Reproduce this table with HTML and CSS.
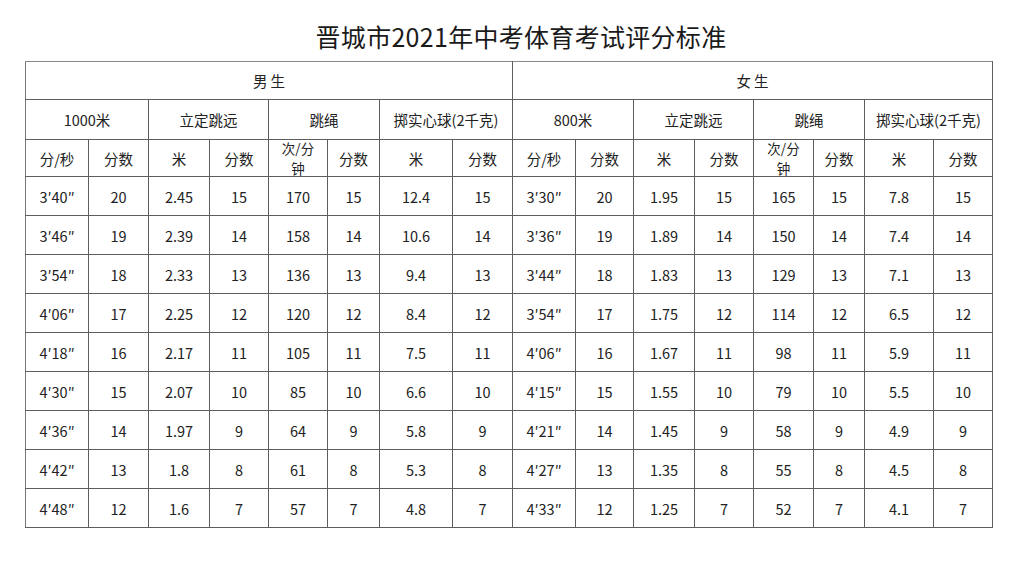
FILE: index.html
```html
<!DOCTYPE html>
<html lang="zh-CN">
<head>
<meta charset="utf-8">
<title>晋城市2021年中考体育考试评分标准</title>
<link rel="stylesheet" href="styles.css">
</head>
<body>
<div class="page">
  <h1 class="title">晋城市2021年中考体育考试评分标准</h1>
  <table class="score">
    <colgroup>
      <col style="width:63px"><col style="width:60px"><col style="width:61px"><col style="width:59px">
      <col style="width:59px"><col style="width:52px"><col style="width:73px"><col style="width:60px">
      <col style="width:63px"><col style="width:58px"><col style="width:61px"><col style="width:59px">
      <col style="width:60px"><col style="width:51px"><col style="width:69px"><col style="width:59px">
    </colgroup>
    <tr class="r1">
      <td colspan="8">男&nbsp;生</td>
      <td colspan="8">女&nbsp;生</td>
    </tr>
    <tr class="r2">
      <td colspan="2">1000米</td><td colspan="2">立定跳远</td><td colspan="2">跳绳</td><td colspan="2">掷实心球(2千克)</td>
      <td colspan="2">800米</td><td colspan="2">立定跳远</td><td colspan="2">跳绳</td><td colspan="2">掷实心球(2千克)</td>
    </tr>
    <tr class="r3">
      <td>分/秒</td><td>分数</td><td>米</td><td>分数</td><td class="two"><div class="stack"><span>次/分</span><span>钟</span></div></td><td>分数</td><td>米</td><td>分数</td>
      <td>分/秒</td><td>分数</td><td>米</td><td>分数</td><td class="two"><div class="stack"><span>次/分</span><span>钟</span></div></td><td>分数</td><td>米</td><td>分数</td>
    </tr>
    <tr><td>3′40″</td><td>20</td><td>2.45</td><td>15</td><td>170</td><td>15</td><td>12.4</td><td>15</td><td>3′30″</td><td>20</td><td>1.95</td><td>15</td><td>165</td><td>15</td><td>7.8</td><td>15</td></tr>
    <tr><td>3′46″</td><td>19</td><td>2.39</td><td>14</td><td>158</td><td>14</td><td>10.6</td><td>14</td><td>3′36″</td><td>19</td><td>1.89</td><td>14</td><td>150</td><td>14</td><td>7.4</td><td>14</td></tr>
    <tr><td>3′54″</td><td>18</td><td>2.33</td><td>13</td><td>136</td><td>13</td><td>9.4</td><td>13</td><td>3′44″</td><td>18</td><td>1.83</td><td>13</td><td>129</td><td>13</td><td>7.1</td><td>13</td></tr>
    <tr><td>4′06″</td><td>17</td><td>2.25</td><td>12</td><td>120</td><td>12</td><td>8.4</td><td>12</td><td>3′54″</td><td>17</td><td>1.75</td><td>12</td><td>114</td><td>12</td><td>6.5</td><td>12</td></tr>
    <tr><td>4′18″</td><td>16</td><td>2.17</td><td>11</td><td>105</td><td>11</td><td>7.5</td><td>11</td><td>4′06″</td><td>16</td><td>1.67</td><td>11</td><td>98</td><td>11</td><td>5.9</td><td>11</td></tr>
    <tr><td>4′30″</td><td>15</td><td>2.07</td><td>10</td><td>85</td><td>10</td><td>6.6</td><td>10</td><td>4′15″</td><td>15</td><td>1.55</td><td>10</td><td>79</td><td>10</td><td>5.5</td><td>10</td></tr>
    <tr><td>4′36″</td><td>14</td><td>1.97</td><td>9</td><td>64</td><td>9</td><td>5.8</td><td>9</td><td>4′21″</td><td>14</td><td>1.45</td><td>9</td><td>58</td><td>9</td><td>4.9</td><td>9</td></tr>
    <tr><td>4′42″</td><td>13</td><td>1.8</td><td>8</td><td>61</td><td>8</td><td>5.3</td><td>8</td><td>4′27″</td><td>13</td><td>1.35</td><td>8</td><td>55</td><td>8</td><td>4.5</td><td>8</td></tr>
    <tr><td>4′48″</td><td>12</td><td>1.6</td><td>7</td><td>57</td><td>7</td><td>4.8</td><td>7</td><td>4′33″</td><td>12</td><td>1.25</td><td>7</td><td>52</td><td>7</td><td>4.1</td><td>7</td></tr>
  </table>
</div>
</body>
</html>
```

FILE: styles.css
```css
html, body {
  margin: 0;
  padding: 0;
  background: #ffffff;
}
body {
  font-family: "Noto Sans CJK SC", "Noto Sans", sans-serif;
  color: #222222;
}
.page {
  padding: 16px 0 0 25px;
}
.title {
  margin: 0;
  width: 992px;
  text-align: center;
  font-size: 25px;
  font-weight: 400;
  line-height: 40px;
  letter-spacing: 0.3px;
  color: #1a1a1a;
}
.score {
  margin-top: 5px;
  border-collapse: collapse;
  table-layout: fixed;
  width: 967px;
}
.score td {
  border: 1px solid #5e5e5e;
  text-align: center;
  vertical-align: middle;
  padding: 0;
  font-size: 14.5px;
  line-height: 17px;
  height: 39px;
  box-sizing: border-box;
  white-space: nowrap;
}
.score tr.r1 td {
  height: 38px;
  border-top-color: #888888;
}
.score tr.r2 td {
  height: 40px;
}
.score tr.r3 td {
  height: 37px;
}
.score td:first-child {
  border-left-color: #777777;
}
.stack {
  height: 35px;
  display: flex;
  flex-direction: column;
  justify-content: center;
  align-items: center;
  font-size: 13.5px;
  line-height: 20px;
}
```
